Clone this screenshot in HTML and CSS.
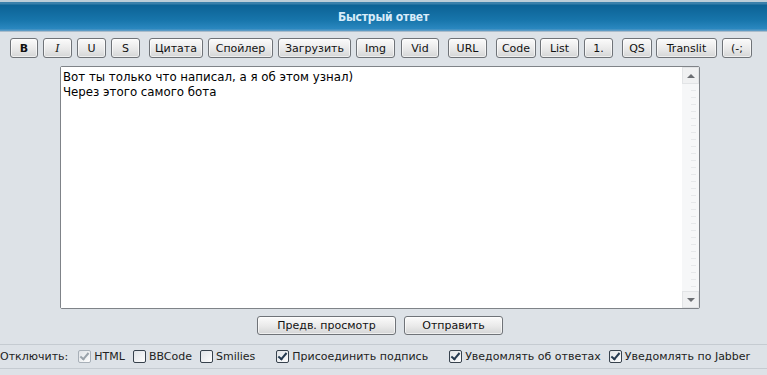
FILE: index.html
```html
<!DOCTYPE html>
<html lang="ru">
  <head>
    <meta charset="UTF-8" />
    <title>Быстрый ответ</title>
    <link rel="stylesheet" href="styles.css">
  </head>
  <body>
    <div class="cat-bar">
      <h3>Быстрый ответ</h3>
    </div>

    <form class="quick-reply">
      <div class="toolbar">
        <div class="group">
          <button type="button" class="w28 bold">B</button>
          <button type="button" class="w29 ital">I</button>
          <button type="button" class="w29">U</button>
          <button type="button" class="w29">S</button>
        </div>
        <div class="group">
          <button type="button" class="w54">Цитата</button>
          <button type="button" class="w65">Спойлер</button>
          <button type="button" class="w73">Загрузить</button>
          <button type="button" class="w39">Img</button>
          <button type="button" class="w38 ml6">Vid</button>
        </div>
        <div class="group">
          <button type="button" class="w39">URL</button>
        </div>
        <div class="group">
          <button type="button" class="w40">Code</button>
          <button type="button" class="w39 ml4">List</button>
          <button type="button" class="w29">1.</button>
        </div>
        <div class="group">
          <button type="button" class="w30">QS</button>
          <button type="button" class="w61 ml4">Translit</button>
          <button type="button" class="w30">(-;</button>
        </div>
      </div>

      <div class="editor">
        <textarea name="message">Вот ты только что написал, а я об этом узнал)
Через этого самого бота</textarea>
        <div class="scroll">
          <span class="arrow up"></span>
          <span class="track"></span>
          <span class="arrow down"></span>
        </div>
      </div>

      <div class="actions">
        <button type="button" class="big w139">Предв. просмотр</button>
        <button type="submit" class="big w99">Отправить</button>
      </div>

      <div class="options">
        <span class="label">Отключить:</span>
        <label class="opt"><span class="box checked disabled"></span>HTML</label>
        <label class="opt"><span class="box"></span>BBCode</label>
        <label class="opt wide"><span class="box"></span>Smilies</label>
        <label class="opt wide"><span class="box checked"></span>Присоединить подпись</label>
        <label class="opt"><span class="box checked"></span>Уведомлять об ответах</label>
        <label class="opt"><span class="box checked"></span>Уведомлять по Jabber</label>
      </div>
    </form>
  </body>
</html>
```

FILE: styles.css
```css
body {
  margin: 0;
  background-color: #dde2e7;
  font-family: "DejaVu Sans", Verdana, sans-serif;
  font-size: 11px;
  color: #000;
}

.cat-bar {
  border-top: 2px solid #bccdd8;
  height: 29px;
  background: linear-gradient(#3a80ab 0, #3a80ab 2px, #0c6295 3px, #1775ab 18px, #2b88c0 27px, #5b9bc6 28px);
  border-bottom: 1px solid #a9bccb;
  display: flex;
  align-items: center;
  justify-content: center;
}

.cat-bar h3 {
  margin: 0;
  font-family: "DejaVu Sans Condensed", "DejaVu Sans", sans-serif;
  font-size: 12px;
  font-weight: bold;
  color: #d8ecfa;
  letter-spacing: -0.2px;
}

.toolbar {
  display: flex;
  gap: 9px;
  padding: 6px 0 0 10px;
  height: 20px;
}

.group {
  display: flex;
  gap: 5px;
}

button {
  height: 20px;
  padding: 0;
  font-family: "DejaVu Sans", Verdana, sans-serif;
  font-size: 11px;
  color: #111;
  border: 1px solid #6f7378;
  border-radius: 3px;
  background: linear-gradient(#fbfbfb, #e9e9e9 55%, #d4d5d6);
  box-shadow: inset 0 0 0 1px rgba(255, 255, 255, 0.6);
  cursor: pointer;
}

.bold { font-weight: bold; }
.ital { font-style: italic; font-family: "DejaVu Serif", serif; }
.ml4 { margin-left: -1px; }
.ml6 { margin-left: 1px; }

.w28 { width: 28px; }
.w29 { width: 29px; }
.w30 { width: 30px; }
.w38 { width: 38px; }
.w39 { width: 39px; }
.w40 { width: 40px; }
.w54 { width: 54px; }
.w61 { width: 61px; }
.w65 { width: 65px; }
.w73 { width: 73px; }
.w99 { width: 99px; }
.w139 { width: 139px; }

.editor {
  display: flex;
  width: 638px;
  height: 241px;
  margin: 8px 0 0 60px;
  background: #fff;
  border: 1px solid #7f8388;
  border-radius: 2px;
}

.editor textarea {
  flex: 1;
  border: none;
  outline: none;
  resize: none;
  padding: 3px 2px;
  font-family: "DejaVu Sans", Verdana, sans-serif;
  font-size: 11.8px;
  line-height: 15px;
  color: #000;
  overflow: hidden;
}

.scroll {
  width: 17px;
  display: flex;
  flex-direction: column;
  background-color: #f6f7f8;
  background-image: radial-gradient(#dcdfe2 0.6px, transparent 0.7px);
  background-size: 2px 2px;
}

.arrow {
  height: 17px;
  background: #f0f1f2;
  border: 1px solid #e2e4e6;
  box-sizing: border-box;
  display: flex;
  align-items: center;
  justify-content: center;
}

.arrow::after {
  content: "";
  border-left: 4px solid transparent;
  border-right: 4px solid transparent;
}

.arrow.up::after { border-bottom: 4px solid #6c6f73; }
.arrow.down::after { border-top: 4px solid #6c6f73; }

.track {
  flex: 1;
  background: repeating-linear-gradient(transparent 0 6px, #e6e8ea 6px 7px);
  margin: 0 3px 0 9px;
}

.actions {
  display: flex;
  justify-content: center;
  gap: 8px;
  width: 640px;
  margin: 7px 0 0 60px;
}

.big {
  height: 19px;
}

.options {
  display: flex;
  align-items: center;
  height: 23px;
  margin-top: 9px;
  border-top: 1px solid #c5cbd1;
  border-bottom: 1px solid #c5cbd1;
  color: #222;
  white-space: nowrap;
}

.options .label {
  margin-right: 10px;
}

.opt {
  display: flex;
  align-items: center;
  margin-right: 8px;
}

.opt.wide {
  margin-right: 21px;
}

.box {
  width: 11px;
  height: 11px;
  margin-right: 3px;
  border: 1px solid #37424d;
  border-radius: 2px;
  background: linear-gradient(135deg, #dfe3e7, #fdfdfd);
  position: relative;
}

.box.disabled {
  border-color: #a8b0b8;
}

.box.checked::after {
  content: "";
  position: absolute;
  left: 3px;
  top: 0;
  width: 3px;
  height: 7px;
  border: solid #243a50;
  border-width: 0 2px 2px 0;
  transform: rotate(40deg);
}

.box.disabled::after {
  border-color: #9aa3ab;
}
```
